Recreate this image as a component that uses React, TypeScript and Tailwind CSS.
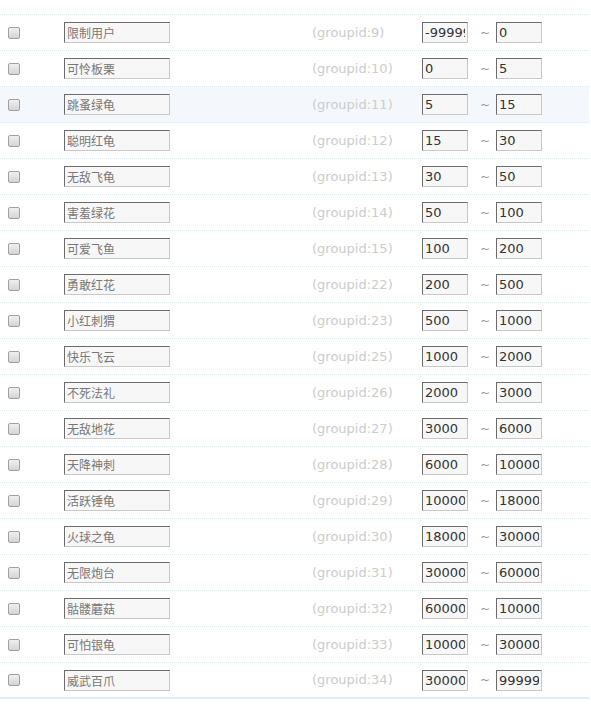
const ROWS = [
  { name: "限制用户", id: 9, min: "-99999", max: "0" },
  { name: "可怜板栗", id: 10, min: "0", max: "5" },
  { name: "跳蚤绿龟", id: 11, min: "5", max: "15" },
  { name: "聪明红龟", id: 12, min: "15", max: "30" },
  { name: "无敌飞龟", id: 13, min: "30", max: "50" },
  { name: "害羞绿花", id: 14, min: "50", max: "100" },
  { name: "可爱飞鱼", id: 15, min: "100", max: "200" },
  { name: "勇敢红花", id: 22, min: "200", max: "500" },
  { name: "小红刺猬", id: 23, min: "500", max: "1000" },
  { name: "快乐飞云", id: 25, min: "1000", max: "2000" },
  { name: "不死法礼", id: 26, min: "2000", max: "3000" },
  { name: "无敌地花", id: 27, min: "3000", max: "6000" },
  { name: "天降神刺", id: 28, min: "6000", max: "10000" },
  { name: "活跃锤龟", id: 29, min: "10000", max: "18000" },
  { name: "火球之龟", id: 30, min: "18000", max: "30000" },
  { name: "无限炮台", id: 31, min: "30000", max: "60000" },
  { name: "骷髅蘑菇", id: 32, min: "60000", max: "100000" },
  { name: "可怕银龟", id: 33, min: "100000", max: "300000" },
  { name: "威武百爪", id: 34, min: "300000", max: "999999" },
];

const inputCls =
  "h-[21px] bg-[#f7f7f7] border border-t-[#6b6b6b] border-l-[#6b6b6b] border-r-[#c8c8c8] border-b-[#c8c8c8] px-[2px] outline-none";

export default function App() {
  return (
    <div className="w-[589px] bg-white font-['DejaVu_Sans',sans-serif]">
      <div className="h-[15px] border-b border-dotted border-[#d6eaf8]" />
      {ROWS.map((row, i) => {
        const isLast = i === ROWS.length - 1;
        return (
          <div
            key={row.id}
            className={`flex items-center h-[36px] ${
              isLast ? "border-b-2 border-solid border-[#dcedf9]" : "border-b border-dotted border-[#d6eaf8]"
            } ${i === 2 ? "bg-[#f4f8fc]" : ""}`}
          >
            <div className="w-[64px] pl-[8px] flex items-center">
              <span className="block w-[12px] h-[12px] rounded-[2px] border border-[#a0a0a0] bg-gradient-to-b from-[#f0f0f0] to-[#d4d4d4]" />
            </div>
            <input
              readOnly
              defaultValue={row.name}
              className={`${inputCls} w-[106px] text-[12px] text-[#777] font-['Noto_Sans_CJK_SC',serif]`}
            />
            <div className="w-[252px] pl-[142px] text-[13px] text-[#cccccc] whitespace-nowrap">
              (groupid:{row.id})
            </div>
            <input
              readOnly
              defaultValue={row.min}
              className={`${inputCls} w-[46px] text-[13px] text-[#333]`}
            />
            <span className="w-[28px] pl-[12px] text-[12px] text-[#999]">~</span>
            <input
              readOnly
              defaultValue={row.max}
              className={`${inputCls} w-[46px] text-[13px] text-[#333]`}
            />
          </div>
        );
      })}
    </div>
  );
}
